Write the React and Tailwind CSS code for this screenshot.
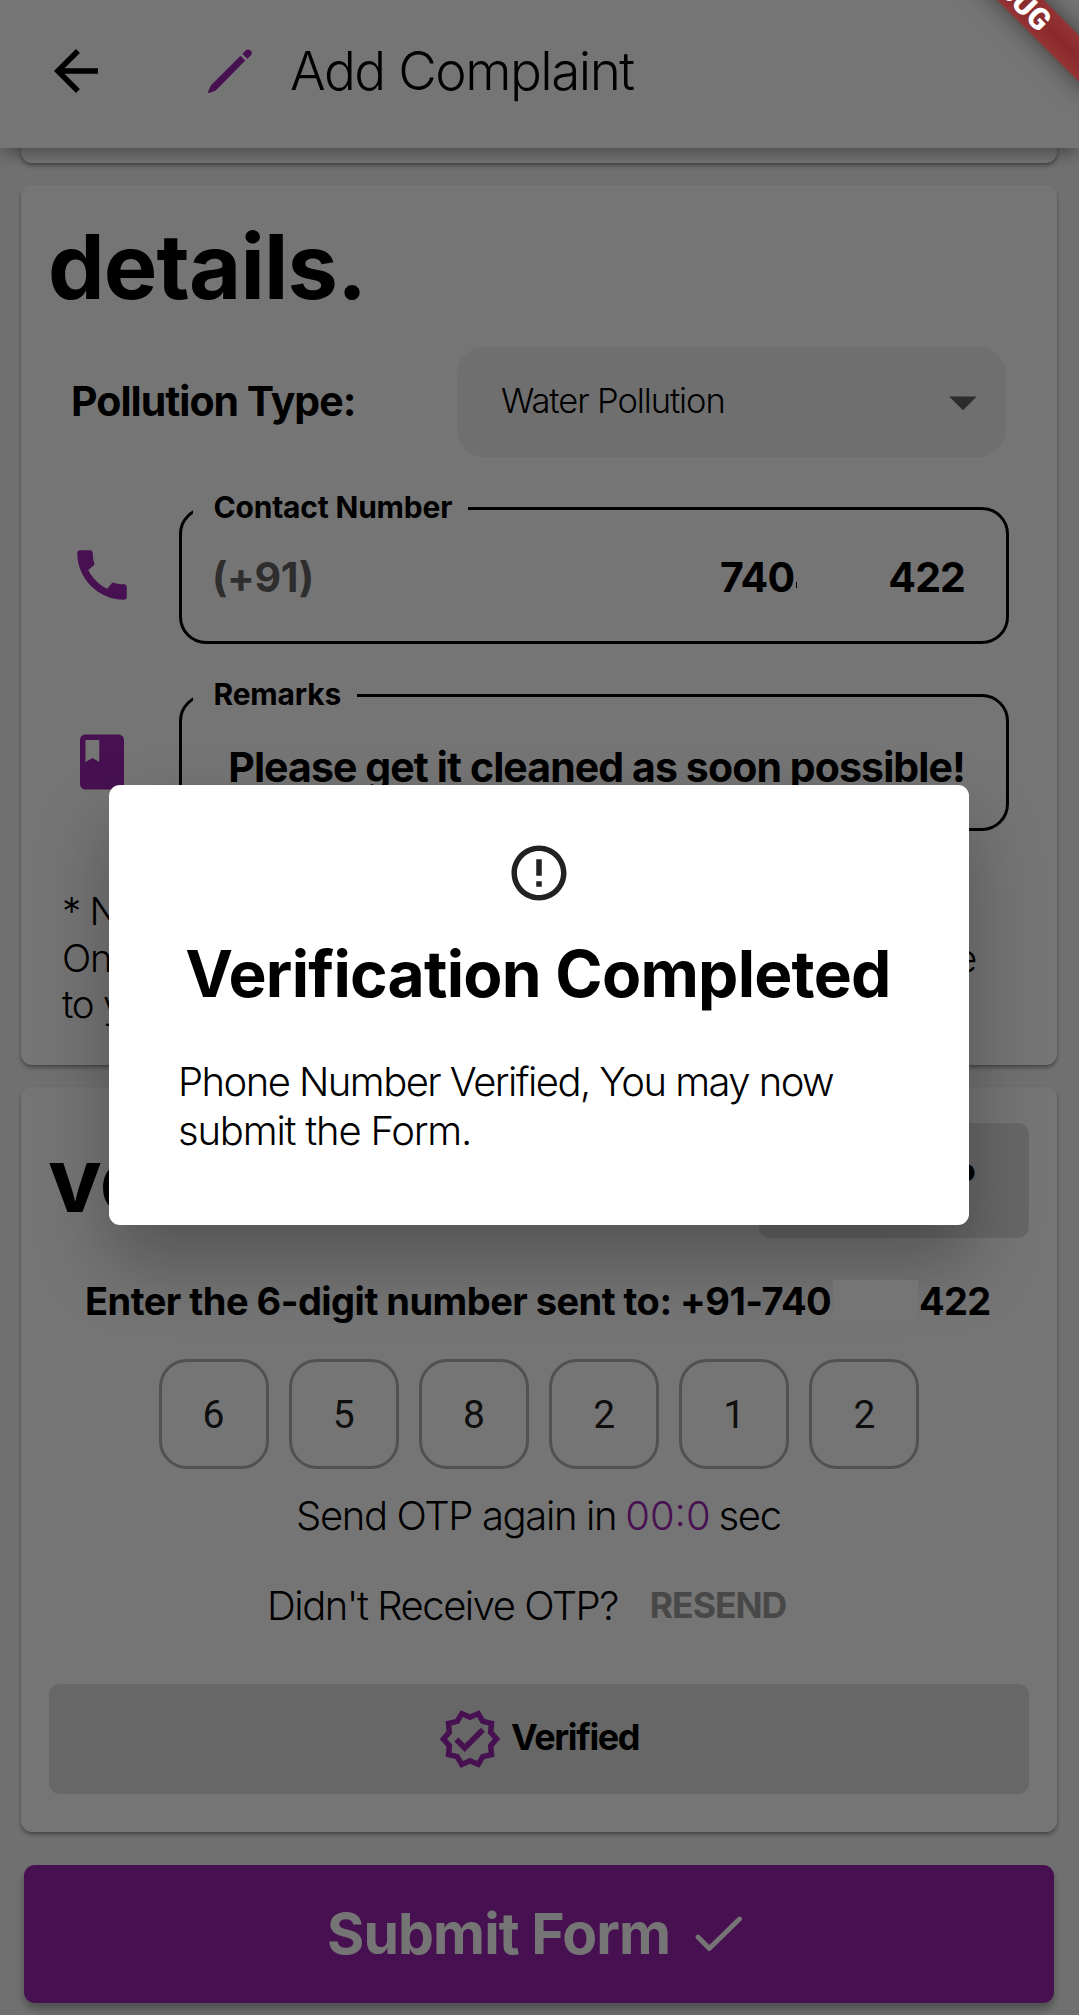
import React from 'react';
import {
  MdArrowBack,
  MdArrowDropDown,
  MdBook,
  MdCall,
  MdErrorOutline,
  MdOutlineVerified,
} from 'react-icons/md';

function PencilIcon() {
  return (
    <svg viewBox="0 0 48 48" className="h-12 w-12 text-[#9c27b0]" fill="currentColor">
      <path d="M34.5 8.800 39.300 13.500 10.500 42.700C9.800 43.400 9 43.900 8 44.200L2.500 46C2 46.100 1.700 45.700 1.900 45.200L4.200 39.700C4.500 38.900 4.900 38.300 5.500 37.700Z" />
      <path d="M36.500 6.900 39.500 3.500C41 2 43.200 2 44.700 3.500 46.200 5 46.200 7 44.700 8.500L41.300 11.700Z" />
    </svg>
  );
}

function CheckIcon() {
  return (
    <svg viewBox="0 0 48 36" className="h-9 w-12" fill="none" stroke="currentColor" strokeWidth="4.8" strokeLinecap="round" strokeLinejoin="round">
      <path d="M3 21 14.300 32.500 44.500 3" />
    </svg>
  );
}

function Card({ className, children }) {
  return (
    <section className={`mr-[22px] ml-[21px] rounded-[11px] bg-white shadow-[0_3px_4px_rgba(0,0,0,0.3),0_1px_2px_rgba(0,0,0,0.12)] ${className}`}>
      {children}
    </section>
  );
}

function OutlinedField({ label, icon: Icon, className, children }) {
  return (
    <div className="ml-5 flex">
      <Icon className="mt-[49px] size-[66px] shrink-0 text-[#9c27b0]" />
      <fieldset className="ml-[44px] h-[151px] w-[830px] rounded-[27px] border-3 border-black px-[11px]">
        <legend className="h-[30px] pr-[16px] pl-[20.500px] text-[30px] leading-[28px] font-bold tracking-[-0.2px]">{label}</legend>
        <div className={`flex h-[118px] items-center text-[41px] font-bold ${className}`}>{children}</div>
      </fieldset>
    </div>
  );
}

function Header() {
  return (
    <header className="relative flex h-[148px] items-center bg-white pb-[6px] shadow-[0_8px_16px_-2px_rgba(0,0,0,0.35)]">
      <MdArrowBack className="ml-[43px] size-[66px]" />
      <div className="ml-[97px]">
        <PencilIcon />
      </div>
      <h1 className="ml-[36px] text-[53px] leading-none font-light tracking-[-1.5px]">Add Complaint</h1>
    </header>
  );
}

function Details() {
  return (
    <Card className="mt-[22px] h-[880px] pl-7">
      <h2 className="-ml-px flex h-[162px] items-center pt-px text-[90px] font-bold tracking-[-0.9px]">details.</h2>
      <div className="flex h-[110px] items-center">
        <span className="ml-[22px] w-[386px] pb-px text-[41px] font-bold tracking-[-0.98px]">Pollution Type:</span>
        <div className="flex h-full w-[549px] items-center justify-between rounded-[27px] bg-[#f2f2f2] pr-[10px] pl-[44px]">
          <span className="pb-[3px] text-[34.5px] font-light tracking-[-1.1px]">Water Pollution</span>
          <MdArrowDropDown className="size-[66px] text-[#616161]" />
        </div>
      </div>
      <div className="mt-9 flex flex-col gap-9">
        <OutlinedField label="Contact Number" icon={MdCall} className="pb-[8px]">
          <span className="ml-[19px] grow tracking-[-0.4px] text-[#646464]">(+91)</span>
          <span className="tracking-[-0.8px]">740</span>
          <span className="mt-[14px] ml-[2px] h-[6px] w-px bg-black" />
          <span className="mr-[30px] ml-[91px] tracking-[-0.9px]">422</span>
        </OutlinedField>
        <OutlinedField label="Remarks" icon={MdBook} className="justify-end pr-[30px] pb-[2px] tracking-[-0.9px]">
          <span>Please get it cleaned as soon possible!</span>
        </OutlinedField>
      </div>
      <div className="mt-[57px] ml-[13px] w-[914px] text-[38.5px] leading-[46.6px] font-light tracking-[-1.3px]">
        <p>* Note:</p>
        <p className="flex justify-between">
          <span>Once verified, an OTP</span>
          <span>code</span>
        </p>
        <p>to your phone.</p>
      </div>
    </Card>
  );
}

function OtpBox({ digit }) {
  return (
    <div className="flex size-[110px] items-center justify-center rounded-[28px] border-3 border-[#b0b0b0] pt-[3px] font-[Roboto] text-[39px] text-[#222]">
      {digit}
    </div>
  );
}

function Verification() {
  return (
    <Card className="mt-[22px] h-[745px] px-7 pt-9">
      <div className="flex h-[115px] items-center justify-between">
        <h2 className="-ml-px pb-[2px] text-[90px] leading-none font-bold tracking-[-0.88px]">verification.</h2>
        <button className="h-full w-[270px] rounded-[11px] bg-[#e0e0e0] pb-[7px] text-[36px] font-bold tracking-[-1.5px]">Send OTP</button>
      </div>
      <p className="mt-[42px] flex h-[42px] items-center pl-9 text-[38px] font-bold whitespace-nowrap">
        <span className="w-[747px] tracking-[-0.52px]">Enter the 6-digit number sent to: +91-740</span>
        <span className="relative z-30 ml-px h-[42px] w-[85px] bg-[#757575]" />
        <span className="ml-px tracking-[-0.7px]">422</span>
      </p>
      <div className="mt-[37px] flex justify-center gap-[20.2px]">
        {['6', '5', '8', '2', '1', '2'].map((digit, i) => (
          <OtpBox key={i} digit={digit} />
        ))}
      </div>
      <p className="mt-[22px] flex h-[49px] items-center pl-[247px] text-[40px] font-light whitespace-pre">
        <span className="tracking-[-1.35px]">Send OTP again in</span>
        <span className="ml-[9px] text-[#9c27b0]">00:0</span>
        <span className="ml-[8px] tracking-[-1.4px]">sec</span>
      </p>
      <p className="mt-[41px] flex h-[49px] items-center pl-[218px] whitespace-nowrap">
        <span className="text-[40px] font-light tracking-[-1.48px]">Didn't Receive OTP?</span>
        <span className="ml-[32px] text-[35.5px] font-bold tracking-[-1px] text-[#9e9e9e]">RESEND</span>
      </p>
      <button className="mt-[54px] flex h-[110px] w-[980px] items-center rounded-[11px] bg-[#e0e0e0] pl-[388px] text-[36px] font-bold">
        <MdOutlineVerified className="size-[66px] text-[#9c27b0]" />
        <span className="ml-[8px] pb-[4px] tracking-[-1.4px]">Verified</span>
      </button>
    </Card>
  );
}

function Dialog() {
  return (
    <div className="absolute inset-0 z-20 flex items-center justify-center bg-black/54 pr-px pb-[5px]">
      <div className="flex h-[440px] w-[860px] flex-col items-center rounded-[11px] bg-white pt-[55px] whitespace-nowrap shadow-[0_38px_72px_rgba(0,0,0,0.28)]">
        <MdErrorOutline className="size-[66px] text-[#222]" />
        <h3 className="mt-[29px] pr-[2px] text-[64px] leading-[78px] font-bold tracking-[-0.75px]">Verification Completed</h3>
        <p className="mt-[44px] ml-[69px] self-start text-[40px] leading-[49px] font-light">
          <span className="block tracking-[-1.56px]">Phone Number Verified, You may now</span>
          <span className="block tracking-[-1.2px]">submit the Form.</span>
        </p>
      </div>
    </div>
  );
}

function DebugBanner() {
  return (
    <div className="absolute -top-[27px] left-[880px] z-40 flex h-[33px] w-[260px] rotate-45 items-center justify-center bg-linear-to-b from-[#953334] via-[#8a2a2c] to-[#953334] font-[Roboto] text-[30px] leading-none font-black text-white shadow-[0_0_24px_rgba(0,0,0,0.5)]">
      <span className="ml-[6px]">DEBUG</span>
    </div>
  );
}

export default function App() {
  return (
    <div className="relative h-[2015px] w-[1079px] overflow-hidden bg-[#f5f5f5] font-['Inter',sans-serif] text-black">
      <Header />
      <div className="-mt-[40px]">
        <Card className="h-[55px]" />
        <Details />
        <Verification />
        <button className="mt-[33px] ml-6 flex h-[138px] w-[1030px] items-center rounded-[11px] bg-[#9c27b0] pl-[303px] text-[57px] font-bold tracking-[-0.9px] text-white shadow-[0_6px_8px_rgba(0,0,0,0.3)]">
          Submit Form
          <span className="ml-[25px]">
            <CheckIcon />
          </span>
        </button>
      </div>
      <Dialog />
      <DebugBanner />
    </div>
  );
}
